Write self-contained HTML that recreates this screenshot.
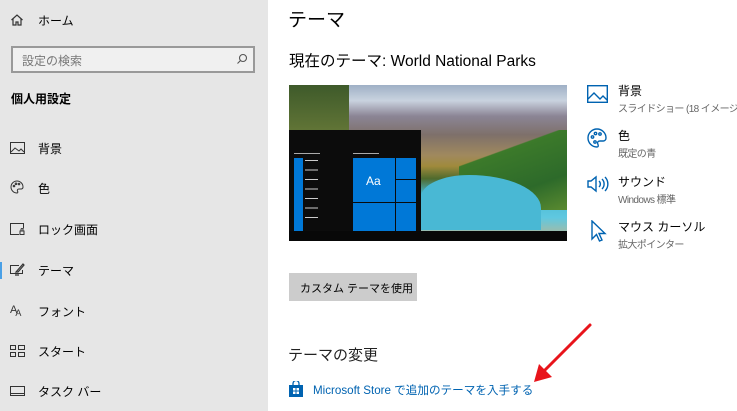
<!DOCTYPE html><html><head><meta charset="utf-8"><style>
*{margin:0;padding:0;box-sizing:border-box}
body{width:737px;height:411px;overflow:hidden;position:relative;background:#fff;font-family:"Liberation Sans","Noto Sans CJK JP",sans-serif;color:#000}
.a{position:absolute;white-space:nowrap}
#side{position:absolute;left:0;top:0;width:268px;height:411px;background:#e6e6e6}
.it{font-size:12px;left:38px}
.ic{position:absolute;left:10px}
.sub{font-size:10px;color:#666;letter-spacing:-0.6px}
.t{font-size:12px}
</style></head><body>
<div id="side">
<svg class="ic" style="top:13px" width="14" height="14" viewBox="0 0 14 14" fill="none" stroke="#333" stroke-width="1.2"><path d="M1.5 7L7 2l5.5 5M3 6v6h3V9h2v3h3V6"/></svg>
<div class="a it" style="top:12px">ホーム</div>
<div class="a" style="left:11px;top:46px;width:244px;height:27px;border:2px solid #999;background:#f0f0f0"></div>
<div class="a" style="left:22px;top:52px;font-size:12px;color:#777">設定の検索</div>
<svg class="a" style="left:236px;top:53px" width="12" height="12" viewBox="0 0 12 12" fill="none" stroke="#555" stroke-width="1.1"><circle cx="7" cy="5" r="3.5"/><path d="M4.5 7.5L1.5 10.5"/></svg>
<div class="a" style="left:11px;top:90px;font-size:12px;font-weight:bold">個人用設定</div>
<svg class="ic" style="top:142px" width="15" height="12" viewBox="0 0 15 12" fill="none" stroke="#333"><rect x=".5" y=".5" width="14" height="11"/><path d="M1 10l4-4 4 3 2-2 3 3"/></svg>
<div class="a it" style="top:140px">背景</div>
<svg class="ic" style="top:180px" width="14" height="14" viewBox="0 0 14 14" fill="none" stroke="#333"><path d="M7 1a6 6 0 1 0 0 12c1 0 1-1 .5-2s0-2 1.5-2h2.5A2 2 0 0 0 13 7 6 6 0 0 0 7 1z"/><circle cx="4" cy="6" r=".8"/><circle cx="6" cy="3.8" r=".8"/><circle cx="9" cy="4" r=".8"/></svg>
<div class="a it" style="top:180px">色</div>
<svg class="ic" style="top:223px" width="15" height="12" viewBox="0 0 15 12" fill="none" stroke="#333"><path d="M9 11.5H.5V.5h13v5"/><rect x="10" y="8" width="4" height="3.5"/><path d="M11 8V6.5a1 1 0 0 1 2 0V8"/></svg>
<div class="a it" style="top:221px">ロック画面</div>
<div class="a" style="left:0;top:262px;width:2px;height:17px;background:#4aa0e6"></div>
<svg class="ic" style="top:263px" width="15" height="13" viewBox="0 0 15 13" fill="none" stroke="#333"><path d="M9 2.5H.5v8h12V7"/><path d="M5 12h4M6 9l7-8 1 1-6 7z" stroke-width="1.2"/></svg>
<div class="a it" style="top:262px">テーマ</div>
<div class="a" style="left:10px;top:304px;font-size:11px;color:#333;letter-spacing:-2px">A<span style="font-size:9px;position:relative;top:3px">A</span></div>
<div class="a it" style="top:303px">フォント</div>
<svg class="ic" style="top:345px" width="15" height="12" viewBox="0 0 15 12" fill="none" stroke="#333"><rect x=".5" y=".5" width="5" height="4"/><rect x="8.5" y=".5" width="6" height="4"/><rect x=".5" y="7.5" width="5" height="4"/><rect x="8.5" y="7.5" width="6" height="4"/></svg>
<div class="a it" style="top:343px">スタート</div>
<svg class="ic" style="top:386px" width="15" height="10" viewBox="0 0 15 10" fill="none" stroke="#333"><rect x=".5" y=".5" width="14" height="9"/><path d="M1 7.5h13"/></svg>
<div class="a it" style="top:383px">タスク バー</div>
</div>

<div class="a" style="left:288px;top:5px;font-size:19px">テーマ</div>
<div class="a" style="left:289px;top:49px;font-size:15.5px">現在のテーマ: World National Parks</div>

<div class="a" style="left:289px;top:85px;width:278px;height:156px;overflow:hidden;background:linear-gradient(180deg,#9fb0c6 0%,#c9d3df 10%,#8b8595 20%,#7e706a 32%,#a0895e 45%,#a08a3c 52%,#4f6a2d 60%,#47b7d2 70%,#5fc8e0 85%,#c4b58a 100%)">
<div class="a" style="left:0;top:0;width:60px;height:60px;background:linear-gradient(180deg,#3e5a2a,#6c7d3a)"></div>
<div class="a" style="left:170px;top:45px;width:108px;height:80px;background:linear-gradient(160deg,transparent 30%,#3c7a2a 31%,#2d6a2a 70%,#5a8a30)"></div>
<div class="a" style="left:132px;top:90px;width:120px;height:55px;background:#49b8d4;border-radius:40% 60% 0 0"></div>
<div class="a" style="left:0;top:45px;width:132px;height:111px;background:#0c0c0c"></div>
<div class="a" style="left:0;top:146px;width:278px;height:10px;background:#080808"></div>
<div class="a" style="left:5px;top:68px;width:26px;height:1px;background:#aaa"></div>
<div class="a" style="left:64px;top:68px;width:26px;height:1px;background:#aaa"></div>
<div class="a" style="left:5px;top:73px;width:9px;height:73px;background:#0078d7"></div>
<div class="a" style="left:16px;top:75px;width:13px;height:64px;background:repeating-linear-gradient(180deg,#ccc 0 1px,transparent 1px 9.5px)"></div>
<div class="a" style="left:64px;top:73px;width:63px;height:73px;background:#0078d7"></div>
<div class="a" style="left:106px;top:73px;width:1px;height:73px;background:#0a0a0a"></div>
<div class="a" style="left:64px;top:117px;width:63px;height:1px;background:#0a0a0a"></div>
<div class="a" style="left:106px;top:94px;width:21px;height:1px;background:#0a0a0a"></div>
<div class="a" style="left:77px;top:89px;color:#fff;font-size:12px">Aa</div>
</div>

<svg class="a" style="left:587px;top:85px" width="21" height="18" viewBox="0 0 21 18" fill="none" stroke="#0063b1" stroke-width="1.4"><rect x=".7" y=".7" width="19.6" height="16.6"/><path d="M1 14l6-6 6 6 3-3 4 4"/></svg>
<div class="a t" style="left:618px;top:82px">背景</div>
<div class="a sub" style="left:618px;top:100px">スライドショー (18 イメージ)</div>
<svg class="a" style="left:587px;top:128px" width="20" height="20" viewBox="0 0 20 20" fill="none" stroke="#0063b1" stroke-width="1.4"><path d="M10 1a9 9 0 1 0 0 18c1.5 0 1.5-1.5.8-3s0-3 2-3h3.5A3 3 0 0 0 19 10 9 9 0 0 0 10 1z"/><circle cx="5.5" cy="9" r="1.2"/><circle cx="8.5" cy="5.5" r="1.2"/><circle cx="13" cy="6" r="1.2"/><circle cx="8" cy="14" r="1.2"/></svg>
<div class="a t" style="left:618px;top:127px">色</div>
<div class="a sub" style="left:618px;top:145px">既定の青</div>
<svg class="a" style="left:587px;top:175px" width="22" height="18" viewBox="0 0 22 18" fill="none" stroke="#0063b1" stroke-width="1.4"><path d="M1 6h3l5-4v14l-5-4H1z"/><path d="M12 6a4 4 0 0 1 0 6M15 4a7 7 0 0 1 0 10M18 2a10 10 0 0 1 0 14"/></svg>
<div class="a t" style="left:618px;top:173px">サウンド</div>
<div class="a sub" style="left:618px;top:191px">Windows 標準</div>
<svg class="a" style="left:591px;top:220px" width="16" height="22" viewBox="0 0 16 22" fill="none" stroke="#0063b1" stroke-width="1.4"><path d="M1 1v18l4.5-4.5 3 6.5 2.5-1-3-6.5H14z"/></svg>
<div class="a t" style="left:618px;top:218px">マウス カーソル</div>
<div class="a sub" style="left:618px;top:236px">拡大ポインター</div>

<div class="a" style="left:289px;top:273px;width:128px;height:28px;background:#ccc"></div>
<div class="a" style="left:300px;top:280px;font-size:11px">カスタム テーマを使用</div>
<div class="a" style="left:288px;top:344px;font-size:15px;color:#222">テーマの変更</div>
<svg class="a" style="left:289px;top:381px" width="14" height="16" viewBox="0 0 14 16"><path d="M4 4V2.5a3 3 0 0 1 6 0V4" fill="none" stroke="#0063b1" stroke-width="1.3"/><rect x="0" y="4" width="14" height="12" fill="#0063b1"/><rect x="4" y="7" width="2.5" height="2.5" fill="#fff"/><rect x="7.5" y="7" width="2.5" height="2.5" fill="#fff"/><rect x="4" y="10.5" width="2.5" height="2.5" fill="#fff"/><rect x="7.5" y="10.5" width="2.5" height="2.5" fill="#fff"/></svg>
<div class="a" style="left:313px;top:382px;font-size:11.6px;color:#0063b1">Microsoft Store で追加のテーマを入手する</div>
<svg class="a" style="left:530px;top:320px" width="66" height="66" viewBox="0 0 66 66"><path d="M60 5L10 55" stroke="#e8141b" stroke-width="3" stroke-linecap="round"/><path d="M4 62l18-5-13-13z" fill="#e8141b"/></svg>
</body></html>
